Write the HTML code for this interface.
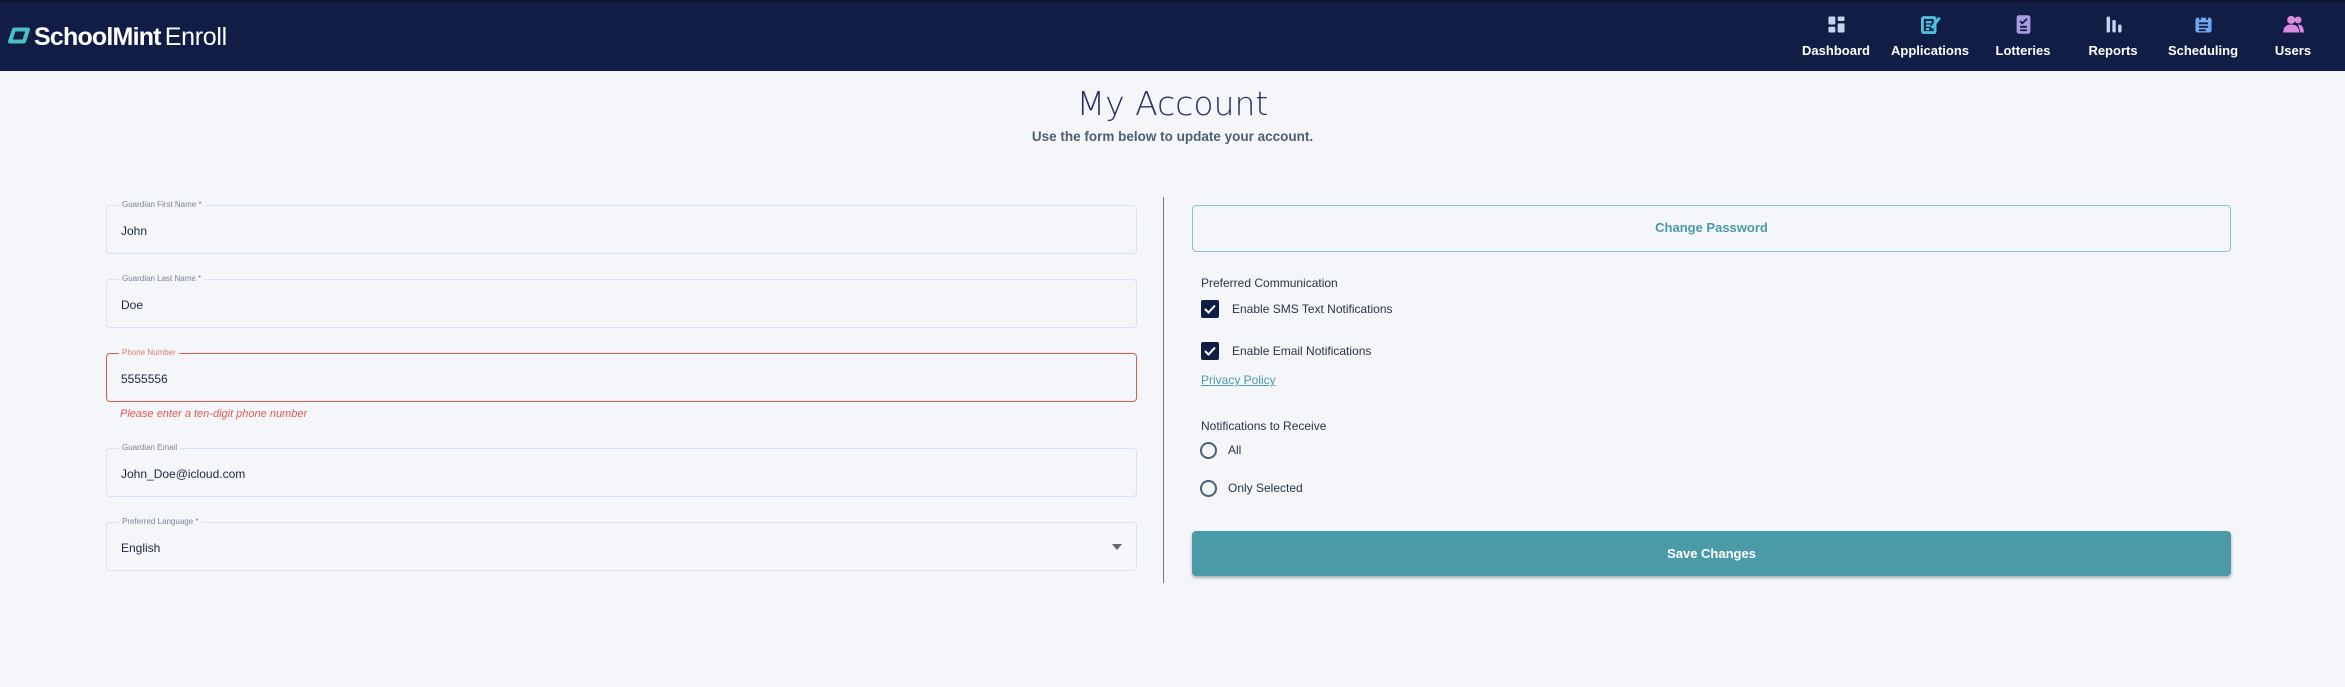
<!DOCTYPE html>
<html><head><meta charset="utf-8"><style>
*{box-sizing:border-box;margin:0;padding:0}
body{width:2345px;height:687px;background:#f4f6fa;font-family:"Liberation Sans",sans-serif;position:relative;overflow:hidden;color:#1d2740}
.nav{position:absolute;left:0;top:0;width:2345px;height:71px;background:#111d45;border-top:3px solid #0c1533}
.logo{position:absolute;left:34px;top:20px;color:#fff;font-size:25px;font-weight:bold;letter-spacing:-0.8px}
.logo span{font-weight:normal;letter-spacing:-0.3px;margin-left:4px}
.ni{position:absolute;top:10px;width:100px;margin-left:-50px;text-align:center;color:#fff;font-weight:bold;font-size:13px}
.ni svg{display:block;margin:0 auto 7px;width:23px;height:23px}
.f{position:absolute;left:106px;width:1031px;height:49px;border:1px solid #d6e2f5;border-radius:4px}
.f .l{position:absolute;left:12px;top:-6px;background:#f4f6fa;padding:0 3px;font-size:8px;color:#7c8595}
.f .v{position:absolute;left:14px;top:18px;font-size:12px;color:#1d2740}
.t{position:absolute;font-size:12px;color:#2a3447}
.cb{position:absolute;left:1201px;width:18px;height:18px;background:#111d45;border-radius:2px}
.rd{position:absolute;left:1200px;width:17px;height:17px;border:2px solid #4b5f78;border-radius:50%}
</style></head><body>
<div class="nav">
<svg style="position:absolute;left:8px;top:24px" width="22" height="17" viewBox="0 0 22 17"><path d="M6 2.5 H20 L16 14.5 H2 Z" fill="none" stroke="#4cc0c0" stroke-width="4" stroke-linejoin="round"/></svg>
<div class="logo">SchoolMint<span>Enroll</span></div>
<div class="ni" style="left:1836px"><svg viewBox="0 0 20 20"><rect x="3" y="3" width="6" height="7" rx="1" fill="#c7d3ef"/><rect x="11" y="3" width="6" height="4" rx="1" fill="#c7d3ef"/><rect x="3" y="12" width="6" height="5" rx="1" fill="#c7d3ef"/><rect x="11" y="9" width="6" height="8" rx="1" fill="#c7d3ef"/></svg>Dashboard</div>
<div class="ni" style="left:1930px"><svg viewBox="0 0 20 20"><rect x="3" y="4" width="11" height="13" rx="1" fill="none" stroke="#4cc0e0" stroke-width="2.5"/><path d="M6 8h5M6 11h4M6 14h3" stroke="#4cc0e0" stroke-width="2"/><path d="M11 13l7-9" stroke="#4cc0e0" stroke-width="2.5"/></svg>Applications</div>
<div class="ni" style="left:2023px"><svg viewBox="0 0 20 20"><rect x="4" y="2" width="12" height="16" rx="2" fill="#a89be0"/><path d="M7 7l2 2 4-4M7 12h6M7 15h6" stroke="#111d45" stroke-width="1.6" fill="none"/></svg>Lotteries</div>
<div class="ni" style="left:2113px"><svg viewBox="0 0 20 20"><rect x="4" y="3" width="3" height="14" rx="1.5" fill="#c7d3ef"/><rect x="9" y="6" width="3" height="11" rx="1.5" fill="#c7d3ef"/><rect x="14" y="10" width="3" height="7" rx="1.5" fill="#c7d3ef"/></svg>Reports</div>
<div class="ni" style="left:2203px"><svg viewBox="0 0 20 20"><rect x="3" y="4" width="14" height="13" rx="2" fill="#6fa8ef"/><path d="M7 2v4M13 2v4M6 9h8M6 12h8M6 15h6" stroke="#111d45" stroke-width="1.6"/></svg>Scheduling</div>
<div class="ni" style="left:2293px"><svg viewBox="0 0 20 20"><circle cx="8" cy="6" r="3.5" fill="#d98be0"/><path d="M1 17c0-5 3-7 7-7s7 2 7 7z" fill="#d98be0"/><circle cx="14" cy="6" r="3" fill="#d98be0"/><path d="M14 10c3 0 5 2 5 7h-3z" fill="#d98be0"/></svg>Users</div>
</div>
<div style="position:absolute;left:0;width:2345px;top:84px;text-align:center;font-family:'DejaVu Sans ExtraLight','DejaVu Sans',sans-serif;font-weight:200;font-size:33px;color:#2a3060">My Account</div>
<div style="position:absolute;left:0;width:2345px;top:129px;text-align:center;font-size:13.5px;font-weight:bold;color:#4b5e72">Use the form below to update your account.</div>

<div class="f" style="top:205px"><div class="l">Guardian First Name *</div><div class="v">John</div></div>
<div class="f" style="top:279px"><div class="l">Guardian Last Name *</div><div class="v">Doe</div></div>
<div class="f" style="top:353px;border-color:#e05a52"><div class="l" style="color:#e07a72">Phone Number</div><div class="v">5555556</div></div>
<div style="position:absolute;left:120px;top:408px;font-size:11px;font-style:italic;color:#e05a52">Please enter a ten-digit phone number</div>
<div class="f" style="top:448px"><div class="l">Guardian Email</div><div class="v">John_Doe@icloud.com</div></div>
<div class="f" style="top:522px"><div class="l">Preferred Language *</div><div class="v">English</div>
<div style="position:absolute;right:14px;top:21px;width:0;height:0;border-left:5px solid transparent;border-right:5px solid transparent;border-top:6px solid #666"></div></div>

<div style="position:absolute;left:1163px;top:197px;width:1px;height:386px;background:#777"></div>

<div style="position:absolute;left:1192px;top:205px;width:1039px;height:47px;border:1.5px solid #86c4d2;border-radius:4px;text-align:center;line-height:44px;font-size:13px;font-weight:bold;color:#4a9aa8">Change Password</div>
<div class="t" style="left:1201px;top:276px">Preferred Communication</div>
<div class="cb" style="top:300px"><svg width="18" height="18"><path d="M4 9l3.5 3.5L14 5.5" stroke="#fff" stroke-width="2" fill="none"/></svg></div>
<div class="t" style="left:1232px;top:302px">Enable SMS Text Notifications</div>
<div class="cb" style="top:342px"><svg width="18" height="18"><path d="M4 9l3.5 3.5L14 5.5" stroke="#fff" stroke-width="2" fill="none"/></svg></div>
<div class="t" style="left:1232px;top:344px">Enable Email Notifications</div>
<div class="t" style="left:1201px;top:373px;color:#4a9aa8;text-decoration:underline">Privacy Policy</div>
<div class="t" style="left:1201px;top:419px">Notifications to Receive</div>
<div class="rd" style="top:442px"></div>
<div class="t" style="left:1228px;top:443px">All</div>
<div class="rd" style="top:480px"></div>
<div class="t" style="left:1228px;top:481px">Only Selected</div>
<div style="position:absolute;left:1192px;top:531px;width:1039px;height:45px;background:#4a9aa8;border-radius:4px;box-shadow:0 2px 3px rgba(0,0,0,0.3);text-align:center;line-height:45px;font-size:13px;font-weight:bold;color:#fff">Save Changes</div>
</body></html>
